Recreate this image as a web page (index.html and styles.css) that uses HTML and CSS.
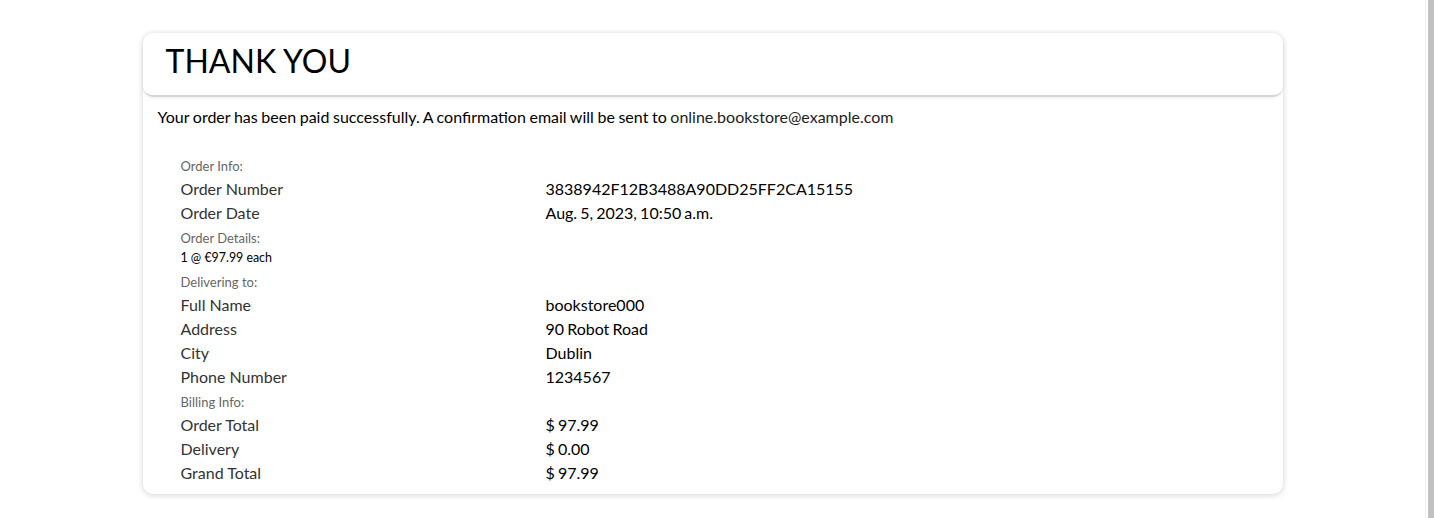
FILE: index.html
```html
<!DOCTYPE html>
<html lang="en">
<head>
<meta charset="utf-8">
<title>Thank you</title>
<link rel="stylesheet" href="styles.css">
</head>
<body>
<div class="page">
  <main class="main">
    <div class="container">
      <div class="card-head">
        <h1 class="title">THANK YOU</h1>
      </div>
      <div class="card-body">
        <p class="lead">Your order has been paid successfully. A confirmation email will be sent to <span class="email">online.bookstore@example.com</span></p>
        <div class="info">
          <div class="section">Order Info:</div>
          <div class="row"><span class="label">Order Number</span><span class="value">3838942F12B3488A90DD25FF2CA15155</span></div>
          <div class="row"><span class="label">Order Date</span><span class="value">Aug. 5, 2023, 10:50 a.m.</span></div>
          <div class="section">Order Details:</div>
          <div class="item">1 @ €97.99 each</div>
          <div class="section">Delivering to:</div>
          <div class="row"><span class="label">Full Name</span><span class="value">bookstore000</span></div>
          <div class="row"><span class="label">Address</span><span class="value">90 Robot Road</span></div>
          <div class="row"><span class="label">City</span><span class="value">Dublin</span></div>
          <div class="row"><span class="label">Phone Number</span><span class="value">1234567</span></div>
          <div class="section">Billing Info:</div>
          <div class="row"><span class="label">Order Total</span><span class="value">$ 97.99</span></div>
          <div class="row"><span class="label">Delivery</span><span class="value">$ 0.00</span></div>
          <div class="row"><span class="label">Grand Total</span><span class="value">$ 97.99</span></div>
        </div>
      </div>
    </div>
  </main>
  <div class="rail"><div class="thumb"></div></div>
</div>
</body>
</html>
```
FILE: styles.css
```css
* { box-sizing: border-box; }
html, body { margin: 0; padding: 0; height: 100%; }
body {
  font-family: Lato, "Open Sans", sans-serif;
  color: #111;
  background: #fff;
  overflow: hidden;
}
.page {
  display: flex;
  height: 518px;
}
.main {
  flex: 1;
  padding-top: 33px;
}
.container {
  width: 1140px;
  margin: 0 auto;
  border-radius: 10px;
  box-shadow: 0 1px 6px rgba(0,0,0,0.18);
  background: #fff;
}
.card-head {
  height: 64px;
  border-radius: 10px;
  border-bottom: 2px solid #d4d4d4;
  box-shadow: 0 1px 3px rgba(0,0,0,0.08);
  padding: 8px 23px 0;
}
.title {
  margin: 0;
  font-size: 32px;
  font-weight: 400;
  line-height: 40px;
  color: #000;
}
.card-body {
  padding: 10px 15px 9px;
}
.lead {
  margin: 0 0 26px;
  font-size: 16px;
  line-height: 20px;
  color: #000;
  word-spacing: -0.5px;
}
.email { color: #222; }
.info {
  padding-left: 23px;
}
.section {
  font-size: 13px;
  line-height: 20px;
  color: #666;
  padding: 3px 0 1px;
}
.item {
  font-size: 12.4px;
  line-height: 18px;
  color: #000;
  padding-bottom: 2px;
}
.row {
  display: grid;
  grid-template-columns: 365px 1fr;
  font-size: 16px;
  line-height: 24px;
}
.label { color: #333; }
.value { color: #000; word-spacing: -1px; }
.rail {
  width: 9px;
  border-left: 1px solid #ececec;
  padding-left: 2px;
  background: #fff;
}
.thumb {
  height: 100%;
  background: #c1c1c1;
}
```
